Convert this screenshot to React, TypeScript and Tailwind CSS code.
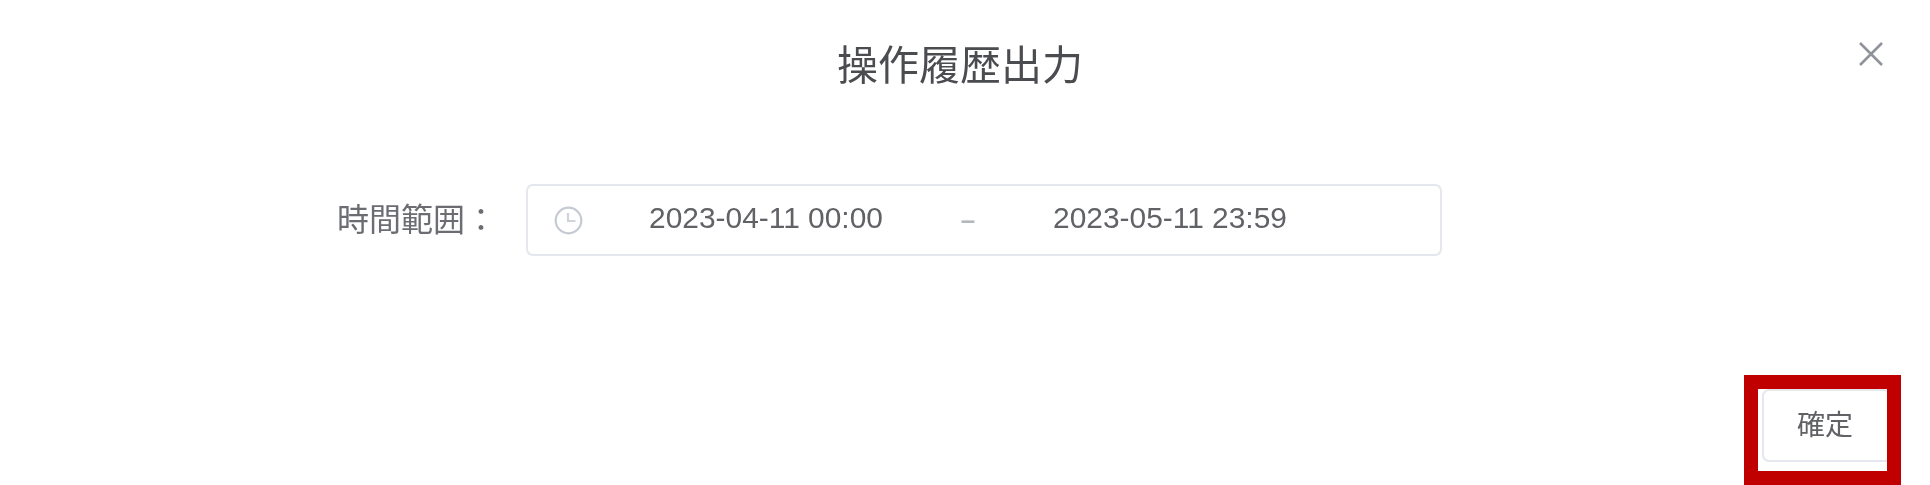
const cjk = 'font-["Liberation_Sans","Noto_Sans_CJK_JP",sans-serif]'

function ClockIcon() {
  return (
    <svg width="29" height="29" viewBox="0 0 29 29" fill="none" stroke="#c6cad3" strokeWidth="2.2">
      <circle cx="14.5" cy="14.5" r="12.8" />
      <path d="M14 7v8h7.5" stroke="#d0d3da" />
    </svg>
  )
}

function CloseIcon() {
  return (
    <svg width="24" height="24" viewBox="0 0 24 24" fill="none" stroke="#909399" strokeWidth="2.6">
      <path d="M1 1l22 22M23 1L1 23" />
    </svg>
  )
}

export default function App() {
  return (
    <div className={`relative flex h-[485px] w-[1930px] flex-col bg-white blur-[0.5px] ${cjk}`}>
      <button className="absolute left-[1859px] top-[42px]">
        <CloseIcon />
      </button>

      <div className="flex h-[130px] items-center justify-center pt-[2px] pr-[10px]">
        <h2 className="text-[41px] leading-none font-normal text-[#4a4c50]">操作履歴出力</h2>
      </div>

      <div className="mt-[54px] flex items-center pl-[337px]">
        <label className="w-[189px] text-[32px] leading-none text-[#6b6d72]">時間範囲：</label>
        <div className="flex h-[72px] w-[916px] items-center rounded-[7px] border-2 border-[#e4e7ed] pl-[26px]">
          <ClockIcon />
          <span className="w-[366px] pb-[3px] text-center text-[29.9px] text-[#606266]">2023-04-11 00:00</span>
          <span className="w-[38px] text-center text-[26px] font-bold text-[#b4b7bd]">–</span>
          <span className="w-[366px] pb-[3px] text-center text-[29.9px] text-[#606266]">2023-05-11 23:59</span>
        </div>
      </div>

      <div className="mt-auto mr-[29px] self-end border-[14px] border-[#c00000]">
        <div className="h-[82px] w-[129px] overflow-hidden pl-[4px]">
          <button className="flex h-[73px] w-[130px] items-center justify-center rounded-[7px] border-2 border-[#e4e7ed] pr-[4px] pt-[1px] text-[28px] text-[#606266]">
            確定
          </button>
        </div>
      </div>
    </div>
  )
}
